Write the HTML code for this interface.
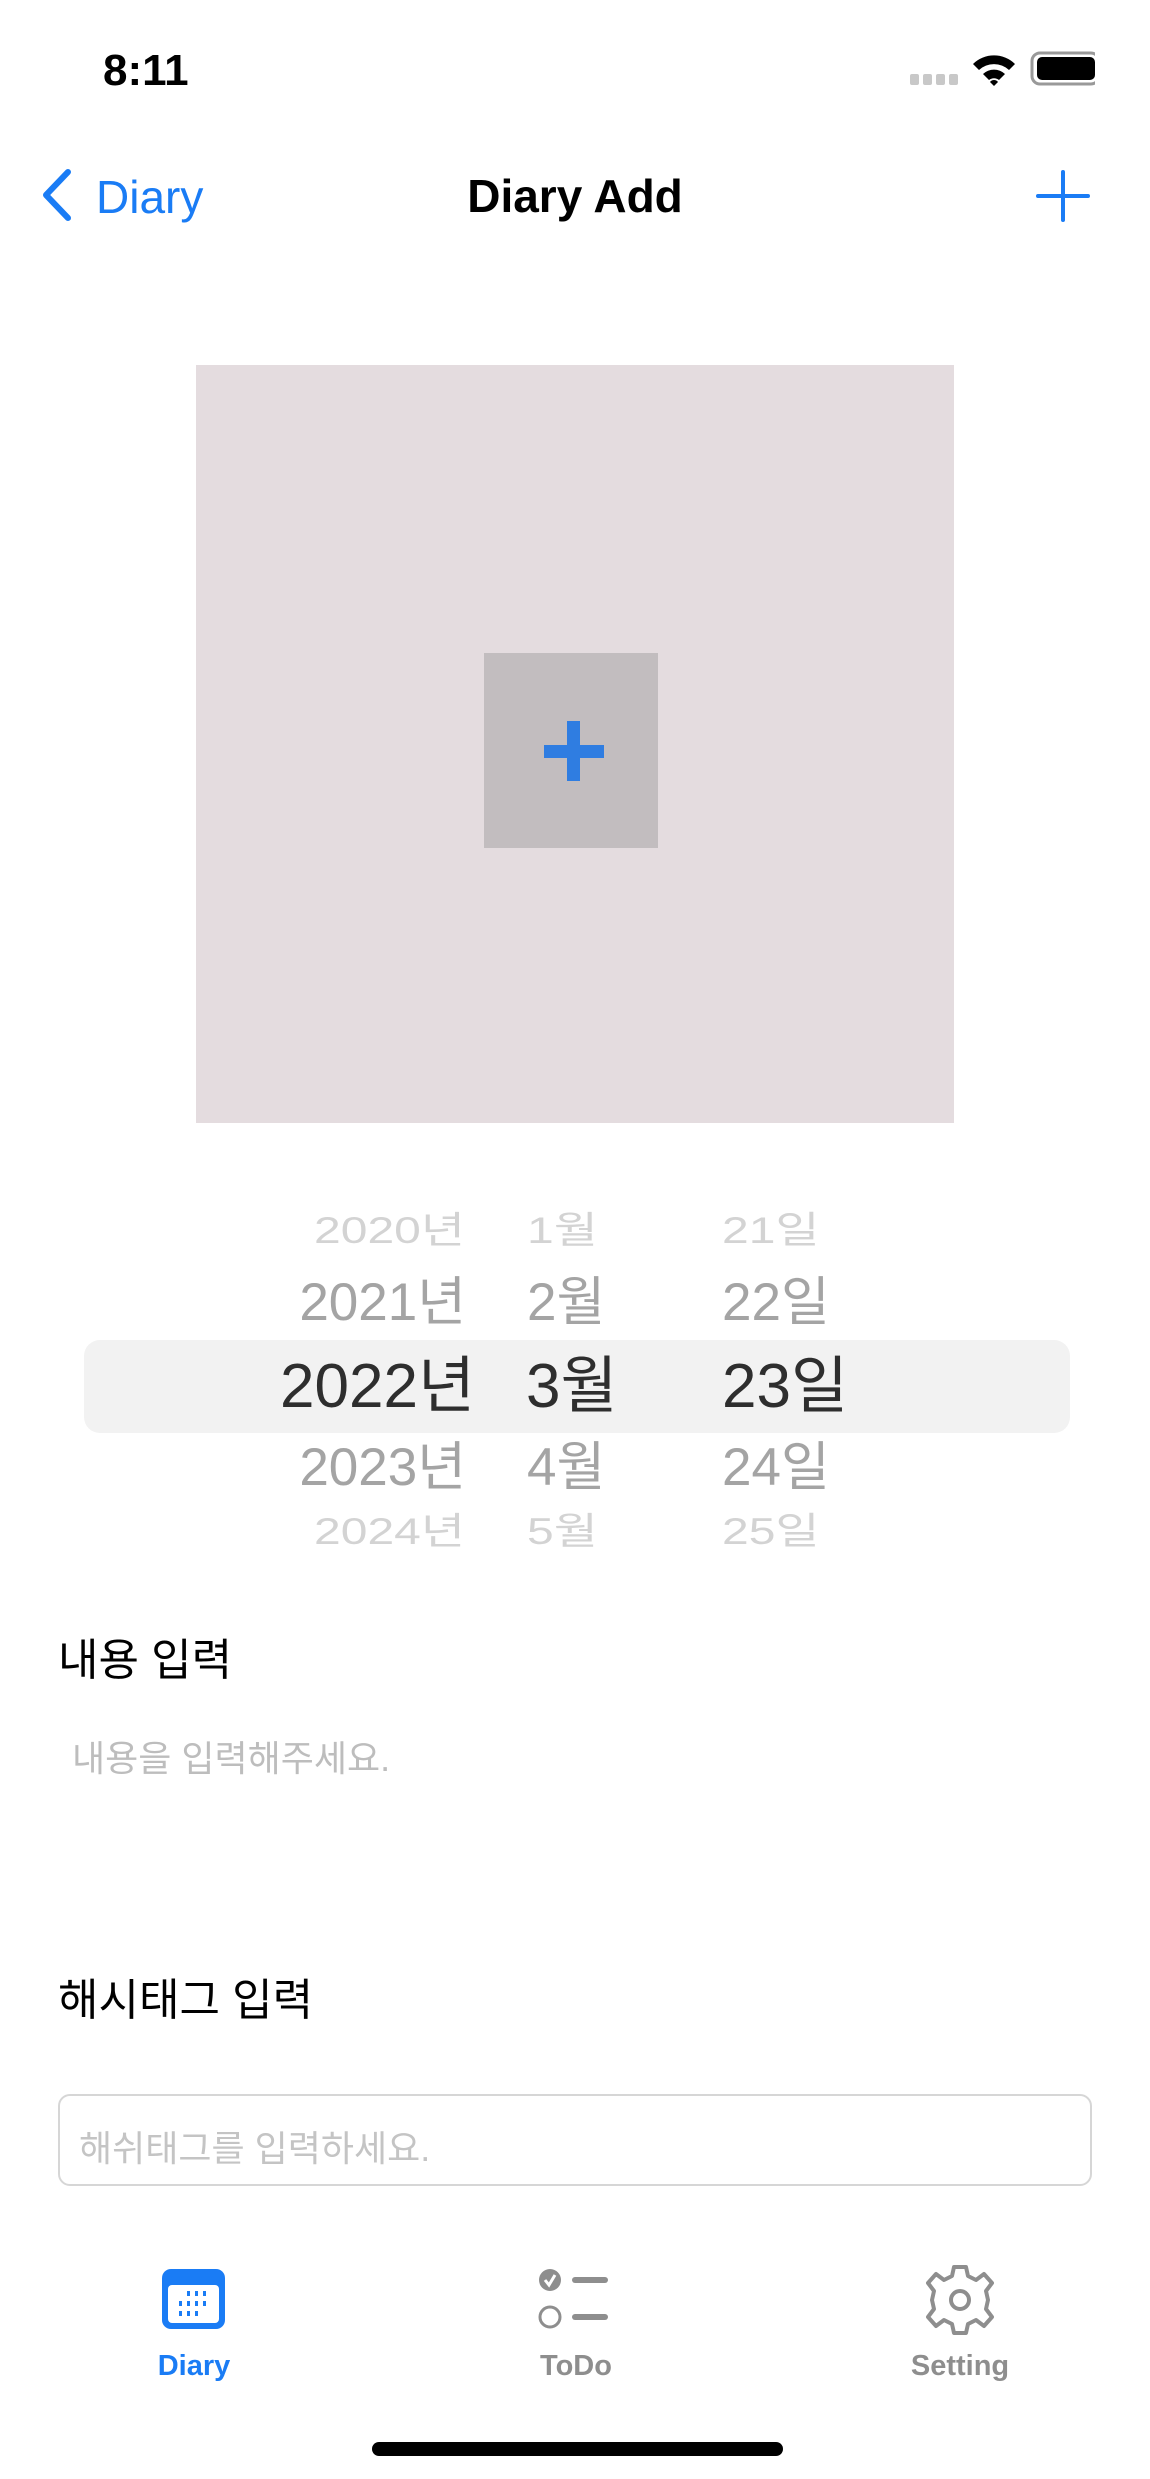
<!DOCTYPE html>
<html><head><meta charset="utf-8">
<style>
*{margin:0;padding:0;box-sizing:border-box}
body{width:1150px;height:2479px;background:#fff;position:relative;overflow:hidden;font-family:"Liberation Sans","Noto Sans CJK KR",sans-serif}
.a{position:absolute;white-space:nowrap}
.row{position:absolute;left:0;width:1150px;line-height:1}
</style></head><body>
<div class="a" style="left:103px;top:46px;font-size:44px;font-weight:bold;">8:11</div>
<svg class="a" style="left:905px;top:50px" width="190" height="40" viewBox="0 0 190 40">
<g fill="#c8c8c8"><rect x="5" y="24" width="9" height="11" rx="2"/><rect x="18" y="24" width="9" height="11" rx="2"/><rect x="31" y="24" width="9" height="11" rx="2"/><rect x="44" y="24" width="9" height="11" rx="2"/></g>
<path d="M68 14 A30 30 0 0 1 110 14 L104 20 A22 22 0 0 0 74 20Z M78 24 A16 16 0 0 1 100 24 L94 30 A8 8 0 0 0 84 30Z M89 36 L85 32 A5 5 0 0 1 93 32Z" fill="#000"/>
<rect x="129" y="3" width="67" height="31" rx="8" fill="none" stroke="#999" stroke-width="3" transform="translate(-2,0)"/>
<rect x="132" y="7" width="58" height="23" rx="5" fill="#000"/>
</svg>
<svg class="a" style="left:38px;top:168px" width="36" height="54" viewBox="0 0 36 54"><path d="M30 4 L8 27 L30 50" fill="none" stroke="#1a7cf5" stroke-width="6" stroke-linecap="round" stroke-linejoin="round"/></svg>
<div class="a" style="left:96px;top:170px;font-size:46px;color:#1a7cf5;">Diary</div>
<div class="a" style="left:0;width:1150px;text-align:center;top:169px;font-size:46px;font-weight:bold;">Diary Add</div>
<svg class="a" style="left:1036px;top:170px" width="54" height="52"><path d="M27 2V50M2 26H52" stroke="#1a7cf5" stroke-width="4" stroke-linecap="round"/></svg>

<div class="a" style="left:196px;top:365px;width:758px;height:758px;background:#e4dcdf"></div>
<div class="a" style="left:484px;top:653px;width:174px;height:195px;background:#c2bdbf"></div>
<div class="a" style="left:544px;top:745px;width:60px;height:13px;background:#2f7de1"></div>
<div class="a" style="left:567px;top:721px;width:13px;height:60px;background:#2f7de1"></div>

<div class="a" style="left:84px;top:1340px;width:986px;height:93px;background:#f2f2f2;border-radius:16px"></div>
<div class="row" style="top:1207px;height:50px;color:#d3d3d3;font-size:48px;transform:scaleY(.78);transform-origin:center">
<span class="a" style="right:685px;top:0">2020년</span><span class="a" style="left:527px;top:0">1월</span><span class="a" style="left:722px;top:0">21일</span></div>
<div class="row" style="top:1276px;height:56px;color:#a4a4a4;font-size:53px">
<span class="a" style="right:684px;top:0">2021년</span><span class="a" style="left:527px;top:0">2월</span><span class="a" style="left:722px;top:0">22일</span></div>
<div class="row" style="top:1356px;height:64px;color:#2e2e2e;font-size:62px">
<span class="a" style="right:675px;top:0">2022년</span><span class="a" style="left:526px;top:0">3월</span><span class="a" style="left:722px;top:0">23일</span></div>
<div class="row" style="top:1441px;height:56px;color:#a4a4a4;font-size:53px">
<span class="a" style="right:684px;top:0">2023년</span><span class="a" style="left:527px;top:0">4월</span><span class="a" style="left:722px;top:0">24일</span></div>
<div class="row" style="top:1508px;height:50px;color:#d3d3d3;font-size:48px;transform:scaleY(.78);transform-origin:center">
<span class="a" style="right:685px;top:0">2024년</span><span class="a" style="left:527px;top:0">5월</span><span class="a" style="left:722px;top:0">25일</span></div>

<div class="a" style="left:58px;top:1624px;font-size:44px;">내용 입력</div>
<div class="a" style="left:72px;top:1730px;font-size:36px;color:#bdbdbd;">내용을 입력해주세요.</div>
<div class="a" style="left:58px;top:1964px;font-size:44px;">해시태그 입력</div>
<div class="a" style="left:58px;top:2094px;width:1034px;height:92px;border:2px solid #d6d6d6;border-radius:12px"></div>
<div class="a" style="left:79px;top:2120px;font-size:36px;color:#c4c4c4;">해쉬태그를 입력하세요.</div>

<svg class="a" style="left:162px;top:2269px" width="63" height="60" viewBox="0 0 63 60">
<rect x="0" y="0" width="63" height="60" rx="9" fill="#1a7cf5"/>
<rect x="6" y="16" width="51" height="38" rx="4" fill="#fff"/>
<g fill="#1a7cf5"><rect x="25" y="22" width="3" height="5"/><rect x="33" y="22" width="3" height="5"/><rect x="41" y="22" width="3" height="5"/>
<rect x="17" y="32" width="3" height="5"/><rect x="25" y="32" width="3" height="5"/><rect x="33" y="32" width="3" height="5"/><rect x="41" y="32" width="3" height="5"/>
<rect x="17" y="42" width="3" height="5"/><rect x="25" y="42" width="3" height="5"/><rect x="33" y="42" width="3" height="5"/></g></svg>
<div class="a" style="left:0;width:388px;text-align:center;top:2350px;font-size:29px;color:#1a7cf5;font-weight:bold">Diary</div>
<svg class="a" style="left:538px;top:2266px" width="76" height="68" viewBox="0 0 76 68">
<circle cx="12" cy="14" r="11" fill="#8e8e8e"/><path d="M7 14l4 5 6-10" fill="none" stroke="#fff" stroke-width="3"/>
<rect x="34" y="11" width="36" height="6" rx="3" fill="#8e8e8e"/>
<circle cx="12" cy="51" r="10" fill="none" stroke="#8e8e8e" stroke-width="3"/>
<rect x="34" y="48" width="36" height="6" rx="3" fill="#8e8e8e"/></svg>
<div class="a" style="left:476px;width:200px;text-align:center;top:2350px;font-size:29px;color:#8e8e8e;font-weight:bold">ToDo</div>
<svg class="a" style="left:920px;top:2264px" width="80" height="72" viewBox="-40 -36 80 72">
<path d="M-6 -33 L6 -33 L8 -24 L16 -20 L24 -26 L32 -17 L26 -9 L28 0 L26 9 L32 17 L24 26 L16 20 L8 24 L6 33 L-6 33 L-8 24 L-16 20 L-24 26 L-32 17 L-26 9 L-28 0 L-26 -9 L-32 -17 L-24 -26 L-16 -20 L-8 -24 Z" fill="none" stroke="#8e8e8e" stroke-width="4" stroke-linejoin="round"/>
<circle r="9" fill="none" stroke="#8e8e8e" stroke-width="4"/></svg>
<div class="a" style="left:860px;width:200px;text-align:center;top:2350px;font-size:29px;color:#8e8e8e;font-weight:bold">Setting</div>
<div class="a" style="left:372px;top:2442px;width:411px;height:14px;border-radius:7px;background:#000"></div>
</body></html>
